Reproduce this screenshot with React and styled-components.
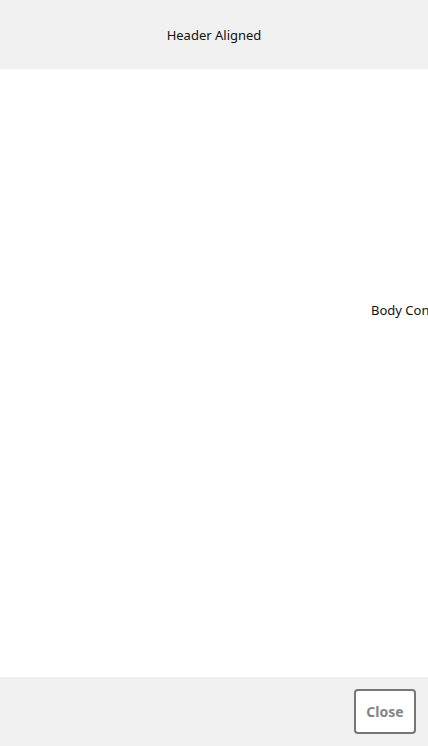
import React from 'react';
import styled, { createGlobalStyle } from 'styled-components';

const GlobalStyle = createGlobalStyle`
	html, body {
		margin: 0;
		padding: 0;
		height: 100%;
		background: #ffffff;
	}
	#root {
		height: 100%;
	}
	body {
		font-family: 'Noto Sans', 'Open Sans', sans-serif;
		color: #111111;
	}
`;

const Page = styled.div`
	display: flex;
	flex-direction: column;
	height: 746px;
	overflow: hidden;
`;

const Header = styled.header`
	display: flex;
	align-items: center;
	justify-content: center;
	height: 69px;
	flex-shrink: 0;
	background: #f0f0f0;
	font-size: 13px;
`;

const Body = styled.main`
	flex: 1;
	display: flex;
	align-items: center;
	padding-left: 371px;
	padding-bottom: 127px;
	overflow: hidden;
	white-space: nowrap;
	font-size: 13px;
`;

const Footer = styled.footer`
	display: flex;
	align-items: center;
	justify-content: flex-end;
	height: 69px;
	flex-shrink: 0;
	padding-right: 12px;
	background: #f0f0f0;
`;

const CloseButton = styled.button`
	width: 62px;
	height: 45px;
	border: 2px solid #767676;
	border-radius: 4px;
	background: #ffffff;
	color: #858585;
	font-family: 'Noto Sans', 'Open Sans', sans-serif;
	font-weight: 700;
	font-size: 14px;
	cursor: pointer;
`;

const App = () => {
	return (
		<>
			<GlobalStyle />
			<Page>
				<Header>Header Aligned</Header>
				<Body>Body Content</Body>
				<Footer>
					<CloseButton>Close</CloseButton>
				</Footer>
			</Page>
		</>
	);
};

export default App;
